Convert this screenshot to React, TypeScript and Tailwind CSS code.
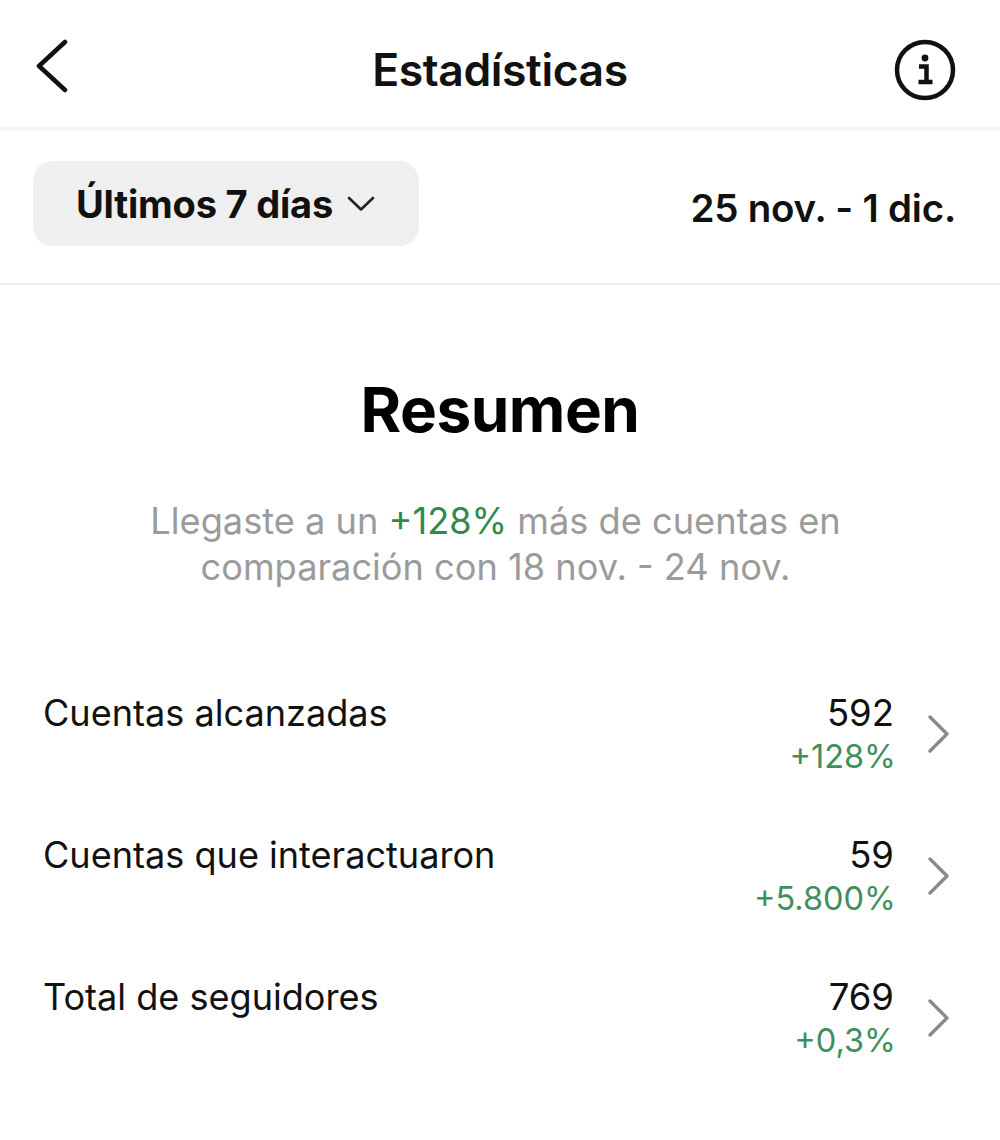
import React from 'react';

interface Stat {
  label: string;
  value: string;
  change: string;
}

const stats: Stat[] = [
  { label: 'Cuentas alcanzadas', value: '592', change: '+128%' },
  { label: 'Cuentas que interactuaron', value: '59', change: '+5.800%' },
  { label: 'Total de seguidores', value: '769', change: '+0,3%' },
];

const BackIcon = () => (
  <svg width="36" height="58" viewBox="0 0 36 58" fill="none" stroke="#111" strokeWidth="4.5" strokeLinecap="round" strokeLinejoin="round">
    <path d="M29 4 L3 28 L29 52" />
  </svg>
);

const InfoIcon = () => (
  <svg width="62" height="62" viewBox="0 0 62 62" fill="none">
    <circle cx="31" cy="31" r="28" stroke="#111" strokeWidth="4.5" />
    <circle cx="31" cy="19" r="3.4" fill="#111" />
    <path d="M25 27.5 H32.5 V42 M24.5 43 H38.5" stroke="#111" strokeWidth="4.5" />
  </svg>
);

const ChevronDown = () => (
  <svg width="28" height="16" viewBox="0 0 28 16" fill="none" stroke="#222" strokeWidth="2.6" strokeLinecap="round" strokeLinejoin="round">
    <path d="M2 2 L14 13.5 L26 2" />
  </svg>
);

const ChevronRight = () => (
  <svg width="24" height="38" viewBox="0 0 24 38" fill="none" stroke="#8a8a8a" strokeWidth="3.4" strokeLinecap="round" strokeLinejoin="round">
    <path d="M4 2 L21 19 L4 36" />
  </svg>
);

const App: React.FC = () => {
  return (
    <div className="w-[1000px] h-[1140px] bg-white text-[#111] font-['Inter',sans-serif] overflow-hidden">
      <header className="h-[131px] border-b-4 border-[#f6f6f6] grid grid-cols-[1fr_auto_1fr] items-start px-[44px]">
        <div className="mt-[38px] -ml-[8px]">
          <BackIcon />
        </div>
        <h1 className="mt-[46px] text-[44.5px] leading-[48px] font-semibold tracking-[-0.4px]">Estadísticas</h1>
        <div className="mt-[39px] flex justify-end">
          <InfoIcon />
        </div>
      </header>

      <div className="h-[154px] border-b-2 border-[#ededed] flex items-start justify-between pt-[30px] pl-[33px] pr-[44px]">
        <button className="w-[386px] h-[85px] rounded-[20px] bg-[#efefef] flex items-center gap-[14px] pl-[43px]">
          <span className="text-[38px] leading-none font-bold tracking-[-0.2px]">Últimos 7 días</span>
          <ChevronDown />
        </button>
        <span className="mt-[27px] text-[38.5px] leading-[40px] font-semibold tracking-[-0.2px]">25 nov. - 1 dic.</span>
      </div>

      <section className="flex flex-col items-center pt-[90px]">
        <h2 className="text-[62px] leading-[70px] font-bold tracking-[-0.5px] text-black">Resumen</h2>
        <p className="mt-[53px] pr-[9px] text-[36.2px] leading-[46px] text-[#9b9b9b] text-center">
          Llegaste a un <span className="text-[#2f8a4e]">+128%</span> más de cuentas en
          <br />
          comparación con 18 nov. - 24 nov.
        </p>
      </section>

      <ul className="mt-[100px] flex flex-col gap-[54px] pl-[43px] pr-[50px]">
        {stats.map((stat) => (
          <li key={stat.label} className="h-[88px] flex items-start justify-between">
            <span className="text-[36.1px] leading-[46px]">{stat.label}</span>
            <div className="flex items-center">
              <div className="flex flex-col items-end">
                <span className="text-[36.5px] leading-[46px]">{stat.value}</span>
                <span className="-mr-[2px] text-[32.5px] leading-[42px] text-[#3f8f5c]">{stat.change}</span>
              </div>
              <div className="ml-[32px]">
                <ChevronRight />
              </div>
            </div>
          </li>
        ))}
      </ul>
    </div>
  );
};

export default App;
